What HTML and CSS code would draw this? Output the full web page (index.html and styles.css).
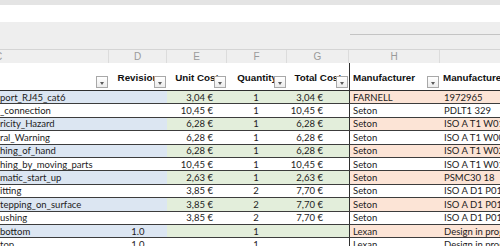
FILE: index.html
```html
<!DOCTYPE html>
<html>
<head>
<meta charset="utf-8">
<link rel="stylesheet" href="styles.css">
</head>
<body>
<div class="app">
  <div class="toolbar-edge"></div>
  <div class="formula-bar"></div>
  <div class="panel">
    <div class="panel-left"></div>
    <div class="panel-right"><div class="panel-rule"></div></div>
  </div>
  <div class="sheet">
    <div class="row colhead">
      <div class="letter letter-c"><span>C</span></div>
      <div class="letter">D</div>
      <div class="letter">E</div>
      <div class="letter">F</div>
      <div class="letter">G</div>
      <div class="letter split">H</div>
      <div class="letter"></div>
    </div>
    <div class="row header">
      <div class="hcell"><span class="label"></span><span class="filter"></span></div>
      <div class="hcell center"><span class="label">Revision</span><span class="filter"></span></div>
      <div class="hcell center"><span class="label">Unit Cost</span><span class="filter"></span></div>
      <div class="hcell center"><span class="label">Quantity</span><span class="filter"></span></div>
      <div class="hcell center"><span class="label">Total Cost</span><span class="filter"></span></div>
      <div class="hcell left divider"><span class="label">Manufacturer</span><span class="filter"></span></div>
      <div class="hcell left"><span class="label">Manufacturer Ref</span></div>
    </div>

    <div class="row data band">
      <div class="cell desc">port_RJ45_cat6</div><div class="cell rev"></div>
      <div class="cell cost">3,04 €</div><div class="cell qty">1</div><div class="cell total">3,04 €</div>
      <div class="cell man divider">FARNELL</div><div class="cell ref">1972965</div>
    </div>
    <div class="row data">
      <div class="cell desc">_connection</div><div class="cell rev"></div>
      <div class="cell cost">10,45 €</div><div class="cell qty">1</div><div class="cell total">10,45 €</div>
      <div class="cell man divider">Seton</div><div class="cell ref">PDLT1 329</div>
    </div>
    <div class="row data band">
      <div class="cell desc">ricity_Hazard</div><div class="cell rev"></div>
      <div class="cell cost">6,28 €</div><div class="cell qty">1</div><div class="cell total">6,28 €</div>
      <div class="cell man divider">Seton</div><div class="cell ref">ISO A T1 W012</div>
    </div>
    <div class="row data">
      <div class="cell desc">ral_Warning</div><div class="cell rev"></div>
      <div class="cell cost">6,28 €</div><div class="cell qty">1</div><div class="cell total">6,28 €</div>
      <div class="cell man divider">Seton</div><div class="cell ref">ISO A T1 W001</div>
    </div>
    <div class="row data band">
      <div class="cell desc">hing_of_hand</div><div class="cell rev"></div>
      <div class="cell cost">6,28 €</div><div class="cell qty">1</div><div class="cell total">6,28 €</div>
      <div class="cell man divider">Seton</div><div class="cell ref">ISO A T1 W024</div>
    </div>
    <div class="row data">
      <div class="cell desc">hing_by_moving_parts</div><div class="cell rev"></div>
      <div class="cell cost">10,45 €</div><div class="cell qty">1</div><div class="cell total">10,45 €</div>
      <div class="cell man divider">Seton</div><div class="cell ref">ISO A T1 W019</div>
    </div>
    <div class="row data band">
      <div class="cell desc">matic_start_up</div><div class="cell rev"></div>
      <div class="cell cost">2,63 €</div><div class="cell qty">1</div><div class="cell total">2,63 €</div>
      <div class="cell man divider">Seton</div><div class="cell ref">PSMC30 18</div>
    </div>
    <div class="row data">
      <div class="cell desc">itting</div><div class="cell rev"></div>
      <div class="cell cost">3,85 €</div><div class="cell qty">2</div><div class="cell total">7,70 €</div>
      <div class="cell man divider">Seton</div><div class="cell ref">ISO A D1 P018</div>
    </div>
    <div class="row data band">
      <div class="cell desc">tepping_on_surface</div><div class="cell rev"></div>
      <div class="cell cost">3,85 €</div><div class="cell qty">2</div><div class="cell total">7,70 €</div>
      <div class="cell man divider">Seton</div><div class="cell ref">ISO A D1 P019</div>
    </div>
    <div class="row data">
      <div class="cell desc">ushing</div><div class="cell rev"></div>
      <div class="cell cost">3,85 €</div><div class="cell qty">2</div><div class="cell total">7,70 €</div>
      <div class="cell man divider">Seton</div><div class="cell ref">ISO A D1 P017</div>
    </div>
    <div class="row data band">
      <div class="cell desc">bottom</div><div class="cell rev">1.0</div>
      <div class="cell cost"></div><div class="cell qty">1</div><div class="cell total"></div>
      <div class="cell man divider">Lexan</div><div class="cell ref">Design in progress</div>
    </div>
    <div class="row data">
      <div class="cell desc">top</div><div class="cell rev">1.0</div>
      <div class="cell cost"></div><div class="cell qty">1</div><div class="cell total"></div>
      <div class="cell man divider">Lexan</div><div class="cell ref">Design in progress</div>
    </div>
  </div>
</div>
</body>
</html>
```
FILE: styles.css
```css
html, body {
  margin: 0;
  padding: 0;
  background: #ffffff;
  overflow: hidden;
}

.app {
  width: 500px;
  height: 246px;
  overflow: hidden;
  display: flex;
  flex-direction: column;
}

.toolbar-edge {
  height: 5px;
  background: #e4e4e4;
  flex: none;
}

.formula-bar {
  height: 17px;
  background: #ffffff;
  flex: none;
}

.panel {
  height: 27px;
  background: #eeeeee;
  display: flex;
  flex: none;
}

.panel-left {
  width: 350px;
}

.panel-right {
  flex: 1;
  padding-top: 12px;
}

.panel-rule {
  height: 1px;
  background: #c4c4c4;
}

.sheet {
  flex: 1;
  display: flex;
  flex-direction: column;
}

.row {
  display: grid;
  grid-template-columns: 109px 58px 60px 60px 62px 91px 110px;
  flex: none;
}

/* column letters */
.colhead {
  height: 14px;
  background: #efefef;
  border-top: 1px solid #d4d4d4;
  box-sizing: border-box;
}

.letter {
  font-family: "Liberation Sans", Arial, sans-serif;
  font-size: 10px;
  color: #9a9a9a;
  text-align: center;
  line-height: 13px;
  border-right: 1px solid #dcdcdc;
  overflow: hidden;
}

.letter-c {
  text-align: left;
}

.letter-c span {
  margin-left: -5px;
}

/* header labels */
.header {
  height: 28px;
  border-bottom: 1px solid #2f2f2f;
  box-sizing: border-box;
  background: #ffffff;
}

.hcell {
  position: relative;
  overflow: hidden;
  display: flex;
  align-items: flex-end;
  padding-bottom: 7px;
  box-sizing: border-box;
  font-family: "Liberation Sans", Arial, sans-serif;
  font-weight: bold;
  font-size: 9.8px;
  color: #111111;
  white-space: nowrap;
}

.hcell.center {
  justify-content: center;
}

.hcell.left {
  justify-content: flex-start;
  padding-left: 3px;
}

.filter {
  position: absolute;
  right: 1px;
  bottom: 2px;
  width: 12px;
  height: 12px;
  box-sizing: border-box;
  border: 1px solid #a8a8a8;
  background: linear-gradient(#ffffff, #ececec);
}

.filter::after {
  content: "";
  position: absolute;
  left: 3px;
  top: 5px;
  border-left: 2.5px solid transparent;
  border-right: 2.5px solid transparent;
  border-top: 3px solid #5a5a5a;
}

.divider {
  border-left: 1px solid #2f2f2f;
}

/* data rows */
.data {
  height: 13.4px;
  border-bottom: 1px solid #3c3c3c;
  box-sizing: border-box;
}

.cell {
  font-family: Lato, "Open Sans", sans-serif;
  font-size: 9.5px;
  color: #1c1c1c;
  white-space: nowrap;
  overflow: hidden;
  display: flex;
  align-items: center;
  box-sizing: border-box;
}

.desc {
  padding-left: 0;
}

.rev {
  justify-content: center;
}

.cost {
  justify-content: flex-end;
  padding-right: 14px;
}

.qty {
  justify-content: center;
  padding-right: 2px;
}

.total {
  justify-content: flex-end;
  padding-right: 26px;
}

.man {
  padding-left: 3px;
}

.ref {
  padding-left: 4px;
}

.band .desc,
.band .rev {
  background: #dce6f2;
}

.band .cost,
.band .qty,
.band .total {
  background: #e3eedb;
}

.band .man,
.band .ref {
  background: #fce4d6;
}
```
